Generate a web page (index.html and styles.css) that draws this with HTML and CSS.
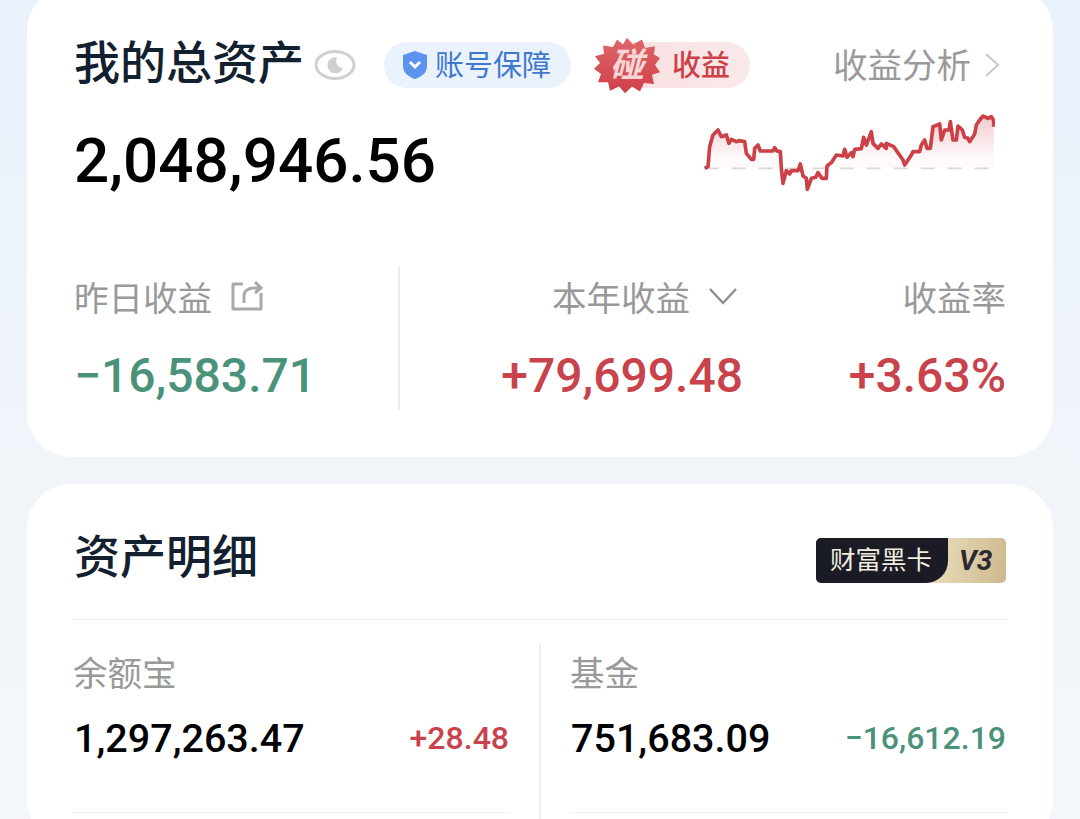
FILE: index.html
```html
<!DOCTYPE html>
<html lang="zh-CN">
<head>
    <meta charset="UTF-8">
    <meta name="viewport" content="width=device-width, initial-scale=1.0">
    <title>我的总资产</title>
    <link rel="stylesheet" href="styles.css">
</head>
<body>
    <!-- 总资产卡片 -->
    <section class="card summary">
        <div class="head-row">
            <h1 class="title">我的总资产</h1>
            <svg class="eye" viewBox="0 0 42 32" width="42" height="32">
                <ellipse cx="21" cy="16" rx="19" ry="13.500" fill="none" stroke="#cfcfcf" stroke-width="3"/>
                <path d="M23 8.500A8 8 0 1 0 29 19A7 7 0 0 1 23 8.500Z" fill="#cfcfcf"/>
            </svg>
            <div class="pill pill-blue">
                <svg viewBox="0 0 26 30" width="26" height="30">
                    <path d="M13 1L25 5V16C25 23 19 27 13 29C7 27 1 23 1 16V5Z" fill="#5b93ee"/>
                    <path d="M8 12L13 17L18 12" fill="none" stroke="#fff" stroke-width="3"/>
                </svg>
                <span class="pill-text">账号保障</span>
            </div>
            <div class="pill pill-red">
                <div class="burst">
                    <svg viewBox="0 0 68 68" width="68" height="57" preserveAspectRatio="none">
                        <defs>
                            <linearGradient id="burstFill" x1="0" y1="0" x2="0" y2="1">
                                <stop offset="0" stop-color="#e0666c"/>
                                <stop offset="1" stop-color="#cf3f48"/>
                            </linearGradient>
                        </defs>
                        <polygon fill="url(#burstFill)" points="34,1 40,9 49,3 52,13 62,11 61,21 67,25 62,33 67,42 59,45 61,56 51,55 47,65 39,59 32,67 26,59 17,64 15,54 5,54 8,44 1,38 7,31 2,23 11,20 10,10 20,12 24,3 30,9"/>
                    </svg>
                    <span>碰</span>
                </div>
                <span class="pill-text">收益</span>
            </div>
            <div class="analysis">
                <span class="pill-text">收益分析</span>
                <svg viewBox="0 0 16 26" width="16" height="26">
                    <path d="M2 2L14 13L2 24" fill="none" stroke="#c9c9c9" stroke-width="2"/>
                </svg>
            </div>
        </div>

        <div class="total-row">
            <div class="total">2,048,946.56</div>
            <svg class="spark" viewBox="40 0 876 300" width="292" height="100">
                <defs>
                    <linearGradient id="sparkFill" x1="0" y1="0" x2="0" y2="1">
                        <stop offset="0" stop-color="#d2444e" stop-opacity="0.28"/>
                        <stop offset="0.8" stop-color="#d2444e" stop-opacity="0.03"/>
                    </linearGradient>
                </defs>
                <path fill="url(#sparkFill)" d="M45 205L55 200L60 140L70 105L85 90L95 110L110 105L118 130L125 118L140 125L148 122L165 125L170 160L185 178L192 178L195 145L205 135L212 153L250 153L255 143L262 153L272 155L275 205L412 205L412 198L425 188L440 165L460 168L465 148L472 172L485 158L490 170L495 148L515 146L522 112L530 135L545 95L550 130L565 145L575 132L590 145L590 130L612 140L640 180L645 195L665 165L670 155L690 155L695 135L705 120L712 145L722 145L730 80L750 72L755 120L765 90L778 90L782 65L790 120L800 120L805 78L818 90L825 112L835 115L840 125L855 102L860 75L870 60L880 48L895 55L905 50L912 62L912 205Z"/>
                <path d="M45 205H912" fill="none" stroke="#dcd8d8" stroke-width="5" stroke-dasharray="42 39"/>
                <polyline fill="none" stroke="#cc4048" stroke-width="11" stroke-linejoin="round" points="45,205 55,200 60,140 70,105 85,90 95,110 110,105 118,130 125,118 140,125 148,122 165,125 170,160 185,178 192,178 195,145 205,135 212,153 250,153 255,143 262,153 272,155 275,205 280,250 290,212 300,222 305,212 325,212 332,192 340,228 350,235 353,268 365,235 378,232 385,218 397,235 410,235 412,198 425,188 440,165 460,168 465,148 472,172 485,158 490,170 495,148 515,146 522,112 530,135 545,95 550,130 565,145 575,132 590,145 590,130 612,140 640,180 645,195 665,165 670,155 690,155 695,135 705,120 712,145 722,145 730,80 750,72 755,120 765,90 778,90 782,65 790,120 800,120 805,78 818,90 825,112 835,115 840,125 855,102 860,75 870,60 880,48 895,55 905,50 912,62 912,80"/>
            </svg>
        </div>

        <div class="earn-row">
            <div class="earn-left">
                <div class="label">
                    昨日收益
                    <svg viewBox="0 0 34 34" width="34" height="34">
                        <path d="M13 5H3V30H31V14" fill="none" stroke="#a9a9ad" stroke-width="3" stroke-linejoin="round"/>
                        <path d="M14 24V17C14 12 18 9 24 9H31M25 3L31 9L25 14" fill="none" stroke="#a9a9ad" stroke-width="3"/>
                    </svg>
                </div>
                <div class="amount green">−16,583.71</div>
            </div>
            <div class="earn-mid">
                <div class="label label-year">
                    本年收益
                    <svg viewBox="0 0 30 20" width="30" height="20">
                        <path d="M2 3L15 17L28 3" fill="none" stroke="#8f8f8f" stroke-width="2.500"/>
                    </svg>
                </div>
                <div class="amount red">+79,699.48</div>
            </div>
            <div class="earn-right">
                <div class="label">收益率</div>
                <div class="amount red">+3.63%</div>
            </div>
        </div>
    </section>

    <!-- 资产明细卡片 -->
    <section class="card detail">
        <div class="detail-head">
            <h2 class="title">资产明细</h2>
            <div class="vip">
                <span class="vip-name">财富黑卡</span>
                <span class="vip-level">V3</span>
            </div>
        </div>
        <div class="detail-grid">
            <div class="cell cell-left">
                <div class="cell-label">余额宝</div>
                <div class="cell-row">
                    <span class="cell-value">1,297,263.47</span>
                    <span class="cell-change red">+28.48</span>
                </div>
            </div>
            <div class="cell cell-right">
                <div class="cell-label">基金</div>
                <div class="cell-row">
                    <span class="cell-value">751,683.09</span>
                    <span class="cell-change green">−16,612.19</span>
                </div>
            </div>
        </div>
    </section>
</body>
</html>
```

FILE: styles.css
```css
html, body {
    margin: 0;
    height: 819px;
    overflow: hidden;
}

body {
    padding: 0 27px;
    box-sizing: border-box;
    background: linear-gradient(180deg, #e9f1fb 0%, #f1f5fa 60%, #f3f6fa 100%);
    font-family: Roboto, "Noto Sans CJK SC", sans-serif;
}

.card {
    background: #fff;
    border-radius: 44px;
    padding: 0 47px;
}

.summary {
    margin-top: -14px;
    height: 471px;
    box-sizing: border-box;
    padding-top: 14px;
}

.detail {
    margin-top: 27px;
    height: 360px;
    box-sizing: border-box;
    padding-left: 46px;
    padding-right: 46px;
}

.title {
    margin: 0 0 4px;
    font-size: 46px;
    font-weight: 500;
    line-height: 60px;
    color: #12202f;
}

/* 第一行 */
.head-row {
    display: flex;
    align-items: center;
    height: 48px;
    margin-top: 41px;
}

.eye {
    margin-left: 10px;
}

.pill {
    display: flex;
    align-items: center;
    height: 46px;
    border-radius: 23px;
    font-size: 29px;
}

.pill-text {
    margin-bottom: 4px;
}

.pill-blue {
    margin-left: 28px;
    padding: 0 20px 0 18px;
    background: #e9f2fd;
    color: #3f78cf;
    gap: 7px;
}

.pill-red {
    margin-left: 39px;
    width: 140px;
    padding-right: 20px;
    box-sizing: border-box;
    justify-content: flex-end;
    background: linear-gradient(90deg, #f9dfe0, #fae9ea);
    color: #cf3f48;
    font-weight: 500;
    position: relative;
}

.burst {
    position: absolute;
    left: -17px;
    top: -5px;
    width: 68px;
    height: 57px;
}

.burst svg {
    display: block;
}

.burst span {
    position: absolute;
    left: 0;
    right: 0;
    top: 8px;
    text-align: center;
    font-size: 34px;
    line-height: 40px;
    font-weight: 700;
    font-style: italic;
    color: #f9d6d6;
}

.analysis {
    margin-left: auto;
    display: flex;
    align-items: center;
    gap: 13px;
    padding-right: 6px;
    font-size: 34.500px;
    color: #9a9a9a;
}

/* 总资产 */
.total-row {
    display: flex;
    justify-content: space-between;
    height: 118px;
}

.total {
    margin-top: 36px;
    font-size: 62px;
    line-height: 72px;
    font-weight: 500;
    color: #000;
}

.spark {
    margin-top: 11px;
    margin-right: 11px;
}

/* 收益 */
.earn-row {
    display: flex;
    margin-top: 59px;
    height: 144px;
}

.label {
    display: flex;
    align-items: center;
    gap: 18px;
    height: 60px;
    font-size: 34.500px;
    color: #999;
}

.label-year {
    margin-right: 5px;
}

.amount {
    margin-top: 20px;
    font-size: 48px;
    line-height: 60px;
    font-weight: 500;
}

.earn-left {
    width: 324px;
    border-right: 2px solid #eee;
}

.earn-mid {
    width: 343px;
    display: flex;
    flex-direction: column;
    align-items: flex-end;
}

.earn-right {
    flex: 1;
    display: flex;
    flex-direction: column;
    align-items: flex-end;
}

.red {
    color: #c8434b;
}

.green {
    color: #4a937a;
}

/* 资产明细 */
.detail-head {
    display: flex;
    align-items: center;
    justify-content: space-between;
    height: 136px;
    padding-top: 14px;
    border-bottom: 1px solid #eee;
    box-sizing: border-box;
}

.detail-head .title {
    margin-left: 1px;
}

.vip {
    display: flex;
    width: 190px;
    height: 45px;
    margin: 4px 1px 0 0;
    border-radius: 5px;
    overflow: hidden;
    background: linear-gradient(100deg, #d2bf95, #f1e5c8 50%, #cdb98d);
}

.vip-name {
    width: 132px;
    padding-left: 14px;
    box-sizing: border-box;
    background: #1b1b26;
    border-bottom-right-radius: 22px;
    color: #f3ece0;
    font-size: 25.500px;
    line-height: 45px;
}

.vip-level {
    flex: 1;
    padding-left: 11px;
    font-size: 28px;
    line-height: 45px;
    font-weight: 700;
    font-style: italic;
    color: #2a2a30;
}

.detail-grid {
    display: flex;
    margin-top: 24px;
}

.cell {
    height: 175px;
    box-sizing: border-box;
}

.cell-left {
    width: 468px;
    padding: 6px 29px 0 0;
    border-right: 2px solid #eee;
}

.cell-right {
    flex: 1;
    padding: 6px 0 0 29px;
}

.cell-label {
    font-size: 34.500px;
    line-height: 48px;
    color: #999;
}

.cell-row {
    display: flex;
    align-items: center;
    justify-content: space-between;
    margin-top: 18px;
    padding-bottom: 52px;
    border-bottom: 1px solid #eee;
    height: 44px;
}

.cell-value {
    margin-left: 1px;
    font-size: 39.500px;
    font-weight: 500;
    color: #000;
}

.cell-change {
    margin-right: 1px;
    font-size: 32px;
    font-weight: 500;
}
```
